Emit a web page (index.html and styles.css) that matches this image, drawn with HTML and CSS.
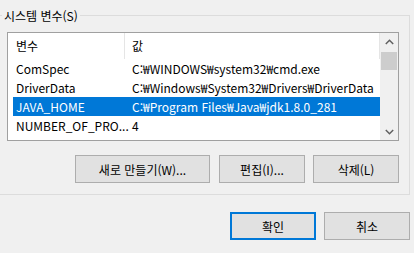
FILE: index.html
```html
<!DOCTYPE html>
<html lang="ko">
<head>
<meta charset="utf-8">
<title>시스템 변수</title>
<link rel="stylesheet" href="styles.css">
</head>
<body>
<div class="dialog">
  <fieldset class="group">
    <legend class="group-title">시스템 변수(S)</legend>
    <div class="listbox">
      <div class="list-main">
        <div class="list-header">
          <div class="hcell hname">변수</div>
          <div class="hcell hvalue">값</div>
        </div>
        <div class="row"><span class="cell">ComSpec</span><span class="cell">C:₩WINDOWS₩system32₩cmd.exe</span></div>
        <div class="row"><span class="cell">DriverData</span><span class="cell">C:₩Windows₩System32₩Drivers₩DriverData</span></div>
        <div class="row selected"><span class="cell">JAVA_HOME</span><span class="cell">C:₩Program Files₩Java₩jdk1.8.0_281</span></div>
        <div class="row"><span class="cell">NUMBER_OF_PRO...</span><span class="cell">4</span></div>
      </div>
      <div class="scrollbar">
        <div class="sb-btn"><svg width="9" height="6" viewBox="0 0 9 6"><polyline points="0.8,5 4.5,1.3 8.2,5" fill="none" stroke="#606060" stroke-width="1.5"/></svg></div>
        <div class="sb-track"><div class="sb-thumb"></div></div>
        <div class="sb-btn"><svg width="9" height="6" viewBox="0 0 9 6"><polyline points="0.8,1 4.5,4.7 8.2,1" fill="none" stroke="#606060" stroke-width="1.5"/></svg></div>
      </div>
    </div>
    <div class="btn-row">
      <button class="btn btn-wide">새로 만들기(W)...</button>
      <button class="btn">편집(I)...</button>
      <button class="btn">삭제(L)</button>
    </div>
  </fieldset>
  <div class="footer">
    <button class="btn btn-default">확인</button>
    <button class="btn">취소</button>
  </div>
</div>
</body>
</html>
```
FILE: styles.css
```css
html, body {
  margin: 0;
  padding: 0;
}
body {
  background: #f0f0f0;
  font-family: "Noto Sans CJK KR", "Noto Sans", sans-serif;
  font-size: 12px;
  color: #000;
  width: 414px;
  height: 253px;
  overflow: hidden;
}
.dialog {
  display: flex;
  flex-direction: column;
  padding-right: 4px;
}
.group {
  margin: 8px 0 0 -10px;
  padding: 9px 10px 11px 16px;
  border: 1px solid #dcdcdc;
  min-width: 0;
}
.group-title {
  padding: 0 2px;
  margin-left: -5px;
  line-height: 15px;
}
.listbox {
  display: flex;
  height: 107px;
  border: 1px solid #a0a0a0;
  background: #fff;
}
.list-main {
  flex: 1;
  min-width: 0;
  display: flex;
  flex-direction: column;
}
.list-header {
  display: flex;
  height: 26px;
}
.hcell {
  line-height: 26px;
  box-sizing: border-box;
  border-right: 1px solid #e5e5e5;
}
.hname {
  width: 117px;
  padding-left: 8px;
}
.hvalue {
  flex: 1;
  padding-left: 7px;
}
.row {
  display: grid;
  grid-template-columns: 116px 1fr;
  margin-left: 5px;
  height: 19px;
  line-height: 19px;
  white-space: nowrap;
}
.cell {
  padding-left: 3px;
  overflow: hidden;
}
.row.selected {
  background: #0078d7;
  color: #fff;
}
.scrollbar {
  width: 18px;
  background: #f0f0f0;
  display: flex;
  flex-direction: column;
}
.sb-btn {
  height: 17px;
  display: flex;
  align-items: center;
  justify-content: center;
}
.sb-track {
  flex: 1;
  padding: 2px 1px 0 1px;
}
.sb-thumb {
  height: 18px;
  background: #cdcdcd;
}
.btn-row {
  display: flex;
  justify-content: flex-end;
  gap: 8px;
  margin-top: 14px;
}
.btn {
  font: inherit;
  color: #000;
  box-sizing: border-box;
  width: 86px;
  height: 28px;
  padding: 0;
  background: #e1e1e1;
  border: 1px solid #adadad;
  border-radius: 0;
}
.btn-wide {
  width: 135px;
  margin-right: 1px;
}
.btn-default {
  border: 2px solid #0078d7;
}
.footer {
  display: flex;
  justify-content: flex-end;
  gap: 8px;
  margin-top: 17px;
}
```
